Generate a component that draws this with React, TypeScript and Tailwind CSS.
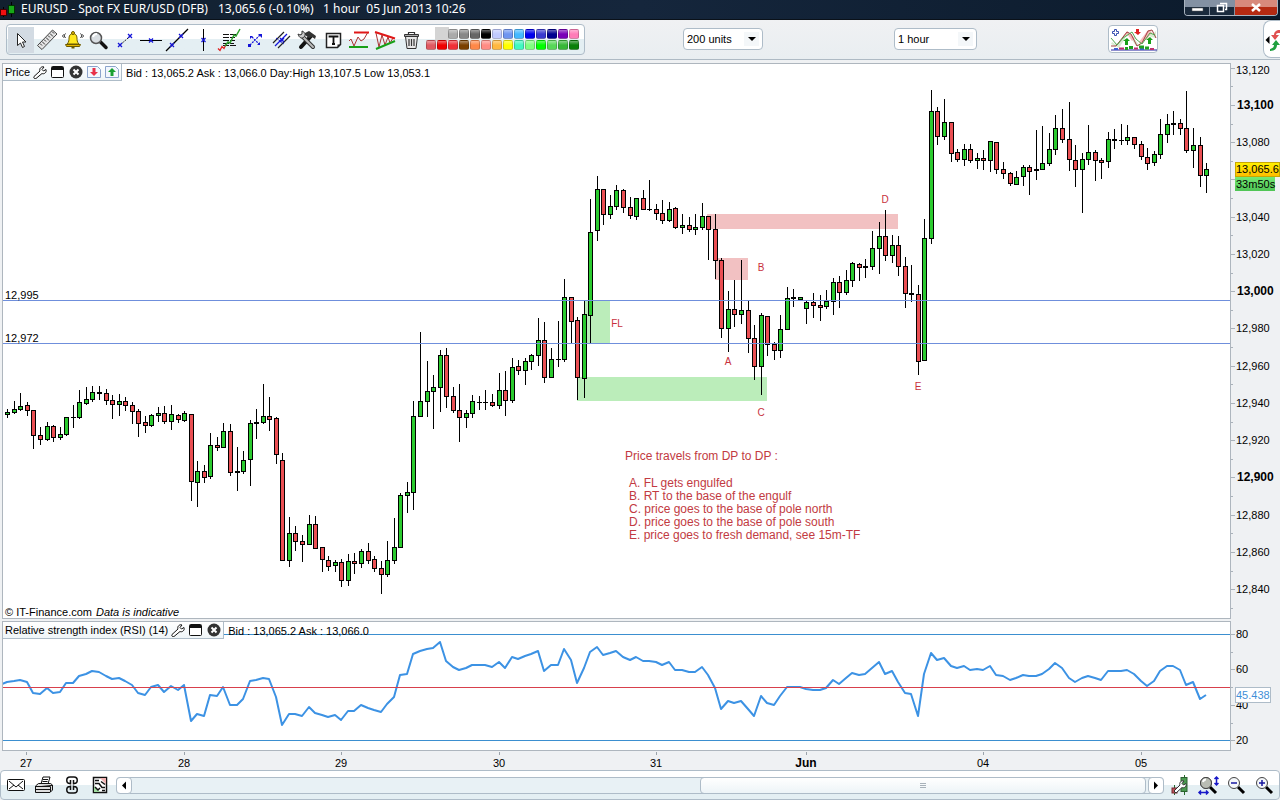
import React from 'react';

// [high, body top, body bottom, low, direction]
// direction: 1 = up, -1 = down, 0 = flat
type Candle = [number, number, number, number, number];

const CANDLES: Candle[] = [
  [409, 412, 415, 418, 1], [401, 409, 413, 414, 1], [393, 406, 410, 411, 1], [402, 405, 411, 416, -1],
  [410, 410, 436, 449, -1], [427, 435, 440, 445, -1], [422, 426, 440, 441, 1], [425, 426, 438, 442, -1],
  [427, 434, 438, 440, 1], [417, 417, 435, 436, 1], [405, 417, 418, 428, 0], [390, 402, 418, 419, 1],
  [387, 399, 404, 405, 1], [386, 392, 400, 402, 1], [386, 392, 394, 400, 0], [389, 393, 401, 405, -1],
  [395, 400, 405, 419, -1], [394, 401, 405, 416, 1], [397, 401, 406, 411, -1], [402, 405, 412, 424, -1],
  [409, 411, 424, 437, -1], [416, 422, 426, 433, -1], [414, 415, 426, 427, 1], [407, 413, 416, 422, 1],
  [406, 413, 422, 424, -1], [405, 414, 422, 430, 1], [414, 415, 420, 423, -1], [411, 413, 421, 422, 1],
  [414, 414, 482, 501, -1], [461, 471, 483, 507, 1], [465, 471, 478, 483, -1], [433, 445, 477, 479, 1],
  [437, 445, 448, 451, -1], [423, 431, 448, 448, 1], [424, 431, 473, 476, -1], [447, 471, 473, 491, 0],
  [451, 460, 472, 474, 1], [420, 423, 460, 486, 1], [409, 422, 424, 439, 0], [384, 416, 423, 424, 1],
  [397, 416, 420, 431, -1], [417, 418, 455, 464, -1], [453, 460, 561, 561, -1], [517, 533, 561, 567, 1],
  [526, 533, 542, 551, -1], [535, 541, 545, 562, -1], [515, 524, 545, 545, 1], [516, 524, 549, 549, -1],
  [547, 547, 560, 572, -1], [556, 560, 567, 571, -1], [560, 562, 566, 572, 1], [559, 562, 581, 587, -1],
  [554, 561, 581, 586, 1], [553, 561, 564, 574, -1], [549, 551, 564, 568, 1], [543, 551, 561, 564, -1],
  [556, 559, 569, 572, -1], [561, 568, 575, 594, -1], [541, 560, 575, 577, 1], [518, 547, 561, 564, 1],
  [493, 495, 548, 548, 1], [482, 492, 496, 513, 1], [401, 416, 493, 510, 1], [332, 401, 417, 417, 1],
  [361, 391, 402, 417, 1], [375, 387, 392, 429, 1], [350, 355, 388, 412, 1], [348, 355, 397, 408, -1],
  [387, 396, 411, 413, -1], [384, 410, 418, 442, -1], [410, 413, 418, 428, 1], [395, 401, 414, 418, 1],
  [396, 402, 403, 410, 0], [390, 402, 403, 410, 0], [394, 402, 406, 407, -1], [373, 390, 406, 409, 1],
  [371, 390, 401, 416, -1], [358, 367, 401, 403, 1], [360, 366, 371, 375, -1], [358, 361, 371, 385, 1],
  [354, 355, 362, 370, 1], [318, 340, 356, 366, 1], [322, 340, 378, 383, -1], [348, 359, 378, 378, 1],
  [321, 359, 360, 367, 0], [279, 297, 360, 362, 1], [297, 297, 322, 343, -1], [317, 320, 378, 400, -1],
  [301, 314, 379, 398, 1], [199, 232, 316, 343, 1], [176, 189, 231, 241, 1], [189, 189, 215, 225, -1],
  [195, 206, 215, 219, 1], [185, 190, 207, 210, 1], [189, 190, 208, 213, -1], [197, 207, 216, 219, -1],
  [198, 198, 217, 220, 1], [190, 198, 210, 210, -1], [180, 209, 210, 211, 0], [204, 209, 214, 220, -1],
  [200, 213, 221, 224, -1], [202, 209, 221, 222, 1], [207, 208, 228, 229, -1], [214, 225, 228, 234, 1],
  [217, 225, 230, 232, -1], [214, 227, 230, 235, 1], [203, 216, 228, 230, 1], [216, 216, 230, 260, -1],
  [214, 229, 261, 279, -1], [258, 260, 329, 338, -1], [291, 309, 329, 352, 1], [280, 309, 315, 327, -1],
  [260, 310, 315, 324, 1], [301, 310, 339, 353, -1], [325, 338, 367, 380, -1], [313, 315, 367, 395, 1],
  [316, 316, 345, 356, -1], [342, 344, 351, 360, -1], [315, 329, 351, 358, 1], [287, 298, 330, 330, 1],
  [289, 297, 299, 307, 0], [297, 297, 300, 300, 1], [300, 302, 309, 324, 1], [293, 302, 306, 318, -1],
  [295, 305, 308, 321, -1], [290, 301, 307, 309, 1], [278, 282, 302, 315, 1], [276, 282, 293, 308, -1],
  [270, 280, 293, 295, 1], [262, 263, 281, 287, 1], [263, 264, 268, 281, -1], [259, 266, 268, 278, 0],
  [231, 248, 267, 270, 1], [222, 236, 249, 274, 1], [210, 236, 256, 261, -1], [235, 245, 256, 263, 1],
  [236, 245, 267, 276, -1], [257, 266, 294, 308, -1], [265, 293, 295, 302, 0], [285, 294, 362, 375, -1],
  [219, 238, 361, 361, 1], [90, 111, 239, 244, 1], [107, 111, 137, 145, -1], [99, 122, 137, 140, 1],
  [122, 122, 154, 162, -1], [149, 152, 160, 162, -1], [144, 149, 160, 166, 1], [144, 149, 161, 163, -1],
  [153, 158, 161, 169, 1], [150, 158, 161, 170, -1], [141, 141, 161, 172, 1], [142, 142, 170, 174, -1],
  [162, 169, 174, 179, -1], [172, 173, 184, 186, -1], [171, 177, 185, 185, 1], [165, 167, 177, 186, 1],
  [165, 167, 172, 195, -1], [130, 169, 171, 180, 0], [126, 163, 170, 170, 1], [133, 149, 164, 166, 1],
  [115, 128, 150, 155, 1], [109, 128, 140, 143, -1], [102, 139, 160, 171, -1], [145, 160, 170, 187, -1],
  [153, 159, 170, 213, 1], [125, 152, 160, 165, 1], [150, 152, 161, 181, -1], [158, 160, 163, 179, -1],
  [132, 139, 162, 168, 1], [129, 139, 141, 149, 0], [124, 140, 141, 145, 0], [125, 137, 141, 145, 1],
  [137, 137, 145, 149, -1], [141, 144, 157, 160, -1], [148, 157, 164, 170, -1], [151, 154, 163, 166, 1],
  [119, 134, 155, 159, 1], [114, 124, 135, 143, 1], [111, 123, 125, 135, 0], [119, 123, 129, 135, -1],
  [91, 128, 151, 153, -1], [128, 145, 151, 168, 1], [137, 145, 176, 187, -1], [163, 169, 176, 193, 1],
];

const RSI = [
  682, 681, 680, 682, 693, 694, 688, 693, 692, 683, 683, 676, 674, 671, 672, 676, 679, 678, 681, 685,
  693, 695, 687, 685, 692, 686, 690, 685, 721, 714, 716, 695, 696, 687, 705, 705, 699, 681, 680, 678,
  679, 697, 725, 714, 714, 716, 707, 713, 715, 717, 715, 720, 711, 711, 705, 708, 710, 712, 704, 697,
  675, 674, 654, 651, 649, 648, 642, 661, 667, 670, 668, 665, 665, 665, 667, 662, 668, 657, 659, 656,
  654, 651, 671, 665, 665, 649, 660, 683, 668, 652, 647, 655, 653, 651, 657, 660, 657, 661, 661, 662,
  665, 662, 670, 670, 672, 672, 667, 675, 688, 709, 701, 703, 701, 709, 716, 696, 703, 705, 696, 687,
  687, 687, 689, 690, 690, 688, 680, 684, 678, 673, 675, 674, 668, 662, 674, 671, 682, 693, 694, 716,
  674, 653, 660, 658, 666, 668, 666, 670, 669, 670, 666, 675, 676, 680, 678, 675, 676, 676, 674, 669,
  663, 668, 678, 682, 678, 676, 678, 680, 671, 671, 671, 670, 674, 681, 686, 681, 671, 666, 666, 670,
  685, 682, 699, 695,
];

const barX = (i: number) => Math.floor(7.75 + 6.551 * i);
const priceY = (p: number) => Math.round(105 + (13100 - p) * 1.862);

const PRICE_TICKS = Array.from({ length: 30 }, (_, i) => 13120 - i * 10);

const DAYS = [
  { x: 26, label: '27' },
  { x: 184, label: '28' },
  { x: 341, label: '29' },
  { x: 499, label: '30' },
  { x: 656, label: '31' },
  { x: 806, label: 'Jun', bold: true },
  { x: 983, label: '04' },
  { x: 1141, label: '05' },
];

const LETTERS = [
  { x: 617, y: 327, t: 'FL' },
  { x: 728, y: 365, t: 'A' },
  { x: 761, y: 271, t: 'B' },
  { x: 761, y: 416, t: 'C' },
  { x: 885, y: 203, t: 'D' },
  { x: 918, y: 390, t: 'E' },
];

const NOTES = [
  'A. FL gets engulfed',
  'B. RT to the base of the engulf',
  'C. price goes to the base of pole north',
  'D. price goes to the base of pole south',
  'E. price goes to fresh demand, see 15m-TF',
];

const SWATCHES = [
  ['#ffffff', '#d4d4d4', '#aaaaaa', '#888888', '#666666', '#000000', '#c0caff', '#6f95f0', '#45b8ff', '#0000ee', '#3a3ad0', '#000090', '#7a00b8', '#ff7cb8'],
  ['#e05a62', '#f00000', '#f03038', '#7a4000', '#ff8848', '#ff8c84', '#ffb840', '#ffff00', '#40f8c0', '#80ff80', '#00ff00', '#58d858', '#38b838', '#0a800a'],
];

const Mark: React.FC<{ x: number; y: number }> = ({ x, y }) => (
  <path d={`M${x - 2} ${y - 2}l4 4M${x + 2} ${y - 2}l-4 4`} stroke="#1414d8" strokeWidth="1.300" />
);

const TOOLS: { name: string; icon: React.ReactNode }[] = [
  {
    name: 'Pointer',
    icon: <path d="M9.500 6.500v12l3-2.500 2 4.500 2-1-2-4.500h3.500z" fill="#fff" stroke="#222" />,
  },
  {
    name: 'Ruler',
    icon: (
      <g>
        <path d="M3.500 18.500l15-15.500 4.500 4-15 15.500z" fill="#e4e4e4" stroke="#444" />
        <path d="M6 16.500l2 2M8 14.500l3 3M10 12.500l2 2M12 10.500l3 3M14 8.500l2 2M16 6.500l3 3M18 4.500l2 2" stroke="#333" />
      </g>
    ),
  },
  {
    name: 'Alert',
    icon: (
      <g>
        <path d="M7 17c2-2 2-4 2-6 0-3 2-4.500 4-4.500s4 1.500 4 4.500c0 2 0 4 2 6z" fill="#ffe820" stroke="#6b5a00" />
        <path d="M5.500 17.500h15l-1 2h-13z" fill="#e8b800" stroke="#6b5a00" />
        <circle cx="13" cy="6" r="1.500" fill="#e8b800" stroke="#6b5a00" />
        <path d="M11.500 20.500h3" stroke="#6b5a00" strokeWidth="2" />
        <path d="M5.500 6.500c-1.500 1.500-1.500 3 0 4.500M3.500 7.500c-1 1-1 2 0 3M20.500 6.500c1.500 1.500 1.500 3 0 4.500M22.500 7.500c1 1 1 2 0 3" fill="none" stroke="#222" />
      </g>
    ),
  },
  {
    name: 'Zoom',
    icon: (
      <g>
        <path d="M14.500 15l5.500 5.500" stroke="#111" strokeWidth="3.500" strokeLinecap="round" />
        <circle cx="10" cy="11" r="5.500" fill="#d9dee2" stroke="#555" strokeWidth="1.500" />
        <path d="M7 10a4 4 0 0 1 4-3" fill="none" stroke="#fff" strokeWidth="2" />
      </g>
    ),
  },
  {
    name: 'Segment',
    icon: (
      <g>
        <path d="M8 18l11-9.500" stroke="#222" strokeDasharray="2 1" />
        <Mark x={8} y={18} />
        <Mark x={18} y={9} />
      </g>
    ),
  },
  {
    name: 'Horizontal line',
    icon: (
      <g>
        <path d="M2 13.500h22" stroke="#000" />
        <Mark x={13} y={13.5} />
      </g>
    ),
  },
  {
    name: 'Line',
    icon: (
      <g>
        <path d="M2 24L24 2" stroke="#000" strokeWidth="1.200" />
        <Mark x={8} y={18} />
        <Mark x={17} y={9} />
      </g>
    ),
  },
  {
    name: 'Vertical line',
    icon: (
      <g>
        <path d="M13.500 2v22" stroke="#000" />
        <Mark x={13.5} y={13} />
      </g>
    ),
  },
  {
    name: 'Retracement',
    icon: (
      <g>
        <path d="M7 7.500h14M7 10.500h12M7 13.500h12M7 16.500h11M7 18.500h13" stroke="#111" strokeWidth="1.200" strokeDasharray="6 1" />
        <path d="M2 21.500l2 2 2-4 2 2 2-4" fill="none" stroke="#e02020" strokeWidth="1.300" />
        <path d="M9 19l3-4 2 1 4-8 2 1 4-7" fill="none" stroke="#2ca02c" strokeWidth="1.500" />
      </g>
    ),
  },
  {
    name: 'Extension',
    icon: (
      <g>
        <path d="M8 18l10-10M10 10l7 7" stroke="#1414d8" strokeWidth="1.200" strokeDasharray="2 1" />
        <path d="M16 7h4v4zM11 9H8v3zM18 15v3h-3z" fill="#1414d8" />
        <path d="M6 17h3v3H6z" fill="#1414d8" />
      </g>
    ),
  },
  {
    name: 'Parallel lines',
    icon: (
      <g>
        <path d="M5 16L16 5M10 21L22 9" stroke="#222" strokeWidth="1.200" />
        <path d="M7 19L19 7" stroke="#1414d8" strokeWidth="1.200" />
        <path d="M8 11l8 6" stroke="#1414d8" strokeDasharray="2 1" />
        <Mark x={14} y={13} />
      </g>
    ),
  },
  {
    name: 'Settings',
    icon: (
      <g>
        <path d="M7 20L17 9" stroke="#111" strokeWidth="4" strokeLinecap="round" />
        <path d="M11 6l4-2 7 5-1 3-3-2-3 1-4-3z" fill="#333" />
        <path d="M8 9l11 11" stroke="#333" strokeWidth="4" strokeLinecap="round" />
        <path d="M8 9l11 11" stroke="#bbb" strokeWidth="2" strokeLinecap="round" />
        <path d="M4 7c1 4 4 5 6 3s1-5-2-6l0 3-2 1z" fill="#ccc" stroke="#333" />
      </g>
    ),
  },
  {
    name: 'Text',
    icon: (
      <g>
        <path d="M6.500 6.500h14v11l-3 3h-11z" fill="#fff" stroke="#222" strokeWidth="1.500" />
        <path d="M9.500 10.500v-1h8v1M13.500 9v8M12 17h3" fill="none" stroke="#111" strokeWidth="1.800" />
        <path d="M20.500 17.500h-3v3z" fill="#222" />
      </g>
    ),
  },
  {
    name: 'Range pattern',
    icon: (
      <g>
        <path d="M3 14l2-2 3 7 4-9 3 4 3-2 4-7" fill="none" stroke="#a33" />
        <path d="M8 5.500h15" stroke="#e01818" strokeWidth="2" />
        <path d="M3 20h19" stroke="#18a018" strokeWidth="2" />
      </g>
    ),
  },
  {
    name: 'Triangle pattern',
    icon: (
      <g>
        <path d="M4 6l3 14 3-12 3 10 3-8 2 6 3-5" fill="none" stroke="#a33" />
        <path d="M3 5l20 6.500" stroke="#e01818" strokeWidth="2" />
        <path d="M4 22l19-8" stroke="#18a018" strokeWidth="2" />
      </g>
    ),
  },
  {
    name: 'Delete',
    icon: (
      <g>
        <path d="M7.500 9.500h12l-1.500 12h-9z" fill="#e8e8e8" stroke="#333" />
        <path d="M6.500 7.500h14v2h-14z" fill="#aaa" stroke="#333" />
        <path d="M10.500 7V5.500h6V7M11 12v7M13.500 12v7M16 12v7" fill="none" stroke="#333" strokeWidth="1.200" />
      </g>
    ),
  },
];

const Dropdown: React.FC<{ label: string; options: string[]; className: string }> = ({ label, options, className }) => (
  <div className={`relative h-[22px] rounded border border-[#aebcc8] bg-white ${className}`}>
    <select aria-label={label} className="block h-full w-full appearance-none bg-transparent pl-[3px] text-[11px] leading-5 outline-none">
      {options.map((o) => (
        <option key={o}>{o}</option>
      ))}
    </select>
    <svg className="pointer-events-none absolute right-[3px] top-[3px] bg-[#f4f7f9]" width="15" height="14">
      <path d="M4 5h8l-4 4z" fill="#000" />
    </svg>
  </div>
);

const TitleBar: React.FC = () => (
  <header className="flex h-5 shrink-0 items-start border-b border-[#0a1119] bg-gradient-to-r from-[#12202f] via-[#15263c] to-[#0b1a2b] text-white">
    <svg width="18" height="18" className="mt-px shrink-0">
      <path d="M3.500 6v10M11.500 1v15" stroke="#000" />
      <rect x="0.500" y="8.500" width="6" height="6" fill="#f01010" stroke="#400" />
      <rect x="8.500" y="4.500" width="6" height="8" fill="#18a818" stroke="#030" />
    </svg>
    <h1 className="flex whitespace-pre pl-[3px] font-['Noto_Sans','Open_Sans',sans-serif] text-[12px] leading-[18px]">
      <span className="w-[197px]">EURUSD - Spot FX EUR/USD (DFB)</span>
      <span className="w-[105px]">13,065.6 (-0.10%)</span>
      <span>1 hour  05 Jun 2013 10:26</span>
    </h1>
    <div className="ml-auto mr-[2px] flex h-4 overflow-hidden rounded-b border border-t-0 border-[#a9b4c0]">
      <button type="button" aria-label="Minimize" className="w-[25px] border-r border-[#8490a0] bg-gradient-to-b from-[#8391a3] from-50% to-[#1a2a3c] to-50%">
        <svg width="24" height="15"><path d="M7 8h11v3H7z" fill="#fff" stroke="#555" strokeWidth="0.500" /></svg>
      </button>
      <button type="button" aria-label="Restore" className="w-[25px] border-r border-[#8490a0] bg-gradient-to-b from-[#8391a3] from-50% to-[#1a2a3c] to-50%">
        <svg width="24" height="15"><path d="M10 3.500h6.500v6H15M7.500 5.500h6v6h-6z" fill="none" stroke="#fff" strokeWidth="1.500" /></svg>
      </button>
      <button type="button" aria-label="Close" className="w-[42px] bg-gradient-to-b from-[#d88a7c] from-50% to-[#b52a12] to-50%">
        <svg width="42" height="15"><path d="M17 4l8 7M25 4l-8 7" stroke="#fff" strokeWidth="2.500" /></svg>
      </button>
    </div>
  </header>
);

const Toolbar: React.FC = () => (
  <div className="flex h-10 shrink-0 items-start border-b border-[#aebac4] bg-gradient-to-b from-[#f0f1f3] to-[#e9eef1] pl-[6px]">
    <div className="mt-1 flex h-[31px] items-center rounded border border-[#aebcc8] bg-gradient-to-b from-white from-50% to-[#e4eff3] to-50% px-px">
      {TOOLS.map((t, i) => (
        <button key={t.name} type="button" aria-label={t.name} title={t.name} className={i === 0 ? 'h-[26px] w-[26px] bg-[#d3dbe3]' : 'h-[26px] w-[26px]'}>
          <svg width="26" height="26">{t.icon}</svg>
        </button>
      ))}
      <div className="ml-[2px] mr-1 grid grid-cols-14 gap-px">
        {SWATCHES.flat().map((c, i) => (
          <button
            key={i}
            type="button"
            aria-label={`Color ${c}`}
            className={
              i === 0
                ? 'h-[10px] w-[10px]'
                : i === 1
                  ? 'h-[10px] w-[10px] outline-2 outline-[#d4d4d4]'
                  : 'h-[10px] w-[10px] rounded-[2px] border border-black/20 bg-gradient-to-b from-white/40 to-transparent to-50%'
            }
            style={{ backgroundColor: c }}
          />
        ))}
      </div>
    </div>
    <Dropdown label="Units" options={['200 units', '500 units', '1000 units']} className="ml-[98px] mt-2 w-20" />
    <Dropdown label="Timeframe" options={['1 hour', '4 hours', '1 day']} className="ml-[131px] mt-2 w-[83px]" />
    <button type="button" aria-label="Add indicator" className="ml-[131px] mt-[5px] h-7 w-[50px] rounded border border-[#aebcc8] bg-white">
      <svg width="48" height="26">
        <path d="M3 16l5 3L18 6l7 6 5 7L40 5l4 3 3-3v7l-5-1-3-3-9 12h-3l-7-11-3 2-7 11-8-4z" fill="#d9ecd2" />
        <path d="M12 13l6-8 8 7-3 3-5-7zM30 16l9-12 4 2-4 6-8 6z" fill="#f7b9b9" />
        <path d="M2 20l5 0L18 6l4 2 6 12 5-3 6-12 4-1 4 8" fill="none" stroke="#a04040" />
        <path d="M2 12l6 7 6-7 9-6 4 7 6 5 8-11 5 2" fill="none" stroke="#50a850" />
        <path d="M3.500 5.500h2v-2h2v2h2v2h-2v2h-2v-2h-2z" fill="#fff" stroke="#3850b0" />
        <path d="M18 12l3 3h-2v4h-3v-4h-2zM41 11l3 3h-2v4h-3v-4h-2z" fill="#18a018" />
        <path d="M29 9l3-3h-2V3h-3v3h-2z" fill="#e02020" />
        <path d="M2 24h46" stroke="#2020a0" />
        <path d="M5 23h4M31 23h4" stroke="#4060d0" strokeWidth="2" />
        <path d="M10 22.500h5M25 22.500h4M41 23h4" stroke="#c03070" strokeWidth="2" />
        <path d="M16 22.500h3M20 21.500h4M30 21h5M36 22h4" stroke="#20a020" strokeWidth="3" />
      </svg>
    </button>
    <button type="button" aria-label="Show orders" className="ml-auto h-[38px] w-[17px] overflow-hidden rounded-l-lg border border-r-0 border-[#aebcc8] bg-white">
      <svg width="16" height="36">
        <path d="M1.500 19l4-4v8z" fill="#000" />
        <path d="M16 9c-4 0-6 2-6 5H7l4 5 4-5h-3c0-2 2-2 4-2z" fill="#e05050" />
        <path d="M6 30c5 0 7-3 7-6h3l-4-5-4 5h2c0 2-1 3-4 4z" fill="#20a040" />
      </svg>
    </button>
  </div>
);

const WrenchIcon = () => (
  <svg width="16" height="14"><path d="M2 11.500l6-5.500c-1-2 1-5 4-4l-2 2.500 1.500 1.500L14 4.500c1 3-2 5-4 4L4 13.500c-1 1-3-1-2-2z" fill="#fff" stroke="#111" /></svg>
);
const WindowIcon = () => (
  <svg width="14" height="14">
    <rect x="0.500" y="1.500" width="12" height="11" rx="1" fill="#fff" stroke="#111" />
    <path d="M1 2h11v3H1z" fill="#111" />
  </svg>
);
const CloseIcon = () => (
  <svg width="14" height="14">
    <circle cx="7" cy="7" r="6.500" fill="#333" />
    <path d="M4.500 4.500l5 5M9.500 4.500l-5 5" stroke="#fff" strokeWidth="2" />
  </svg>
);
const SheetIcon: React.FC<{ up?: boolean }> = ({ up }) => (
  <svg width="14" height="14">
    <path d="M0.500 1.500h10l3 3v8h-13z" fill="#f3f7fd" stroke="#8ca4cc" />
    {up ? <path d="M7 3l4 4H8.500v4h-3V7H3z" fill="#18a030" /> : <path d="M7 11L3 7h2.500V3h3v4H11z" fill="#e83048" />}
  </svg>
);

const PanelHeader: React.FC<{ title: string; quote: string; extra?: boolean }> = ({ title, quote, extra }) => (
  <div className="absolute left-0 top-0 flex whitespace-nowrap text-[11px] leading-4">
    <div className="flex h-[17px] items-center border-b border-r border-[#aebcc8] bg-gradient-to-b from-white to-[#eff5f8] pl-[2px]">
      <h2>{title}</h2>
      <div className="ml-px flex">
        <button type="button" aria-label="Properties" className="w-[18px] pl-px"><WrenchIcon /></button>
        <button type="button" aria-label="Maximize" className="flex w-[18px] justify-center"><WindowIcon /></button>
        <button type="button" aria-label="Close panel" className="flex w-[18px] justify-center"><CloseIcon /></button>
        {extra && (
          <>
            <button type="button" aria-label="Sell" className="flex w-[18px] justify-center"><SheetIcon /></button>
            <button type="button" aria-label="Buy" className="flex w-[18px] justify-center"><SheetIcon up /></button>
          </>
        )}
      </div>
    </div>
    <p className="pl-1 leading-[18px]">{quote}</p>
  </div>
);

const PriceChart: React.FC = () => (
  <section className="relative min-w-0 overflow-hidden border border-[#aeb6be] bg-white">
    <svg className="block h-full w-full" role="img" aria-label="EURUSD candlestick chart">
      <g transform="translate(-3 -64)">
        <g shapeRendering="crispEdges">
          <rect x="584" y="301" width="26" height="42" fill="#bbedba" />
          <rect x="577" y="377" width="190" height="24" fill="#bbedba" />
          <rect x="707" y="214" width="191" height="15" fill="#f2c1c2" />
          <rect x="715" y="258" width="33" height="22" fill="#f2c1c2" />
          {CANDLES.map(([h, t, b, l, dir], i) => {
            const x = barX(i);
            return (
              <g key={i}>
                <rect x={x} y={h} width="1" height={l - h} fill="#000" />
                <rect x={x - 2} y={t} width="5" height={b - t} fill="#000" />
                {dir !== 0 && <rect x={x - 1} y={t + 1} width="3" height={b - t - 2} fill={dir > 0 ? '#2bcb2f' : '#ea4f53'} />}
              </g>
            );
          })}
          <rect x="3" y="300" width="100%" height="1" fill="#6f8fdc" />
          <rect x="3" y="343" width="100%" height="1" fill="#6f8fdc" />
        </g>
        <g fontSize="11">
          <text x="5" y="299">12,995</text>
          <text x="5" y="342">12,972</text>
        </g>
        <g fontSize="10" fill="#c8313d" textAnchor="middle">
          {LETTERS.map((l) => (
            <text key={l.t} x={l.x} y={l.y}>{l.t}</text>
          ))}
        </g>
        <g fontSize="12" fill="#c23a42">
          <text x="625" y="460">Price travels from DP to DP :</text>
          {NOTES.map((n, i) => (
            <text key={n} x="629" y={487 + i * 13}>{n}</text>
          ))}
        </g>
      </g>
    </svg>
    <PanelHeader title="Price" quote="Bid : 13,065.2 Ask : 13,066.0 Day:High 13,107.5 Low 13,053.1" extra />
    <p className="absolute bottom-0 left-[2px] flex gap-1 text-[11px] leading-3">
      <span>© IT-Finance.com</span>
      <em>Data is indicative</em>
    </p>
  </section>
);

const PriceAxis: React.FC = () => (
  <div className="relative">
    <svg className="block h-full w-full" aria-label="Price axis">
      <g transform="translate(-1231 -63)">
        {PRICE_TICKS.map((p) => {
          const y = priceY(p);
          const major = p % 20 === 0;
          const bold = p % 100 === 0;
          return (
            <g key={p}>
              <rect x="1231" y={y} width={major ? 4 : 2} height="1" fill="#aab2ba" />
              {major && p !== 13060 && (
                <text x={bold ? 1237 : 1236} y={p === 13120 ? 74 : y + 4} fontSize={bold ? 12 : 11} fontWeight={bold ? 700 : 400}>
                  {p.toLocaleString('en-US')}
                </text>
              )}
            </g>
          );
        })}
      </g>
    </svg>
    <div className="absolute left-1 right-0 top-[99px] text-[11px] leading-[14px]">
      <p className="border border-[#c9a800] bg-gradient-to-b from-[#fff000] to-[#ffbe00] leading-[13px]">13,065.6</p>
      <p className="w-10 bg-gradient-to-b from-[#74ea74] to-[#4fc455] pl-px">33m50s</p>
    </div>
  </div>
);

const RsiChart: React.FC = () => (
  <section className="relative min-w-0 overflow-hidden border border-[#aeb6be] bg-white">
    <svg className="block h-full w-full" role="img" aria-label="RSI chart">
      <g transform="translate(-3 -622)">
        <rect x="3" y="634" width="100%" height="1" fill="#3b8fd0" />
        <rect x="3" y="740" width="100%" height="1" fill="#3b8fd0" />
        <polyline
          points={`2,684 ${RSI.map((y, i) => `${barX(i)},${y}`).join(' ')}`}
          fill="none"
          stroke="#3c92e4"
          strokeWidth="2"
          strokeLinejoin="round"
        />
        <rect x="3" y="687" width="100%" height="1" fill="#d8404c" />
      </g>
    </svg>
    <PanelHeader title="Relative strength index (RSI) (14)" quote="Bid : 13,065.2 Ask : 13,066.0" />
  </section>
);

const RsiAxis: React.FC = () => (
  <div className="relative">
    <svg className="block h-full w-full" fontSize="11" aria-label="RSI axis">
      <g transform="translate(-1231 -621)">
        {[80, 70, 60, 50, 40, 30, 20].map((v) => {
          const y = Math.round(634 + (80 - v) * 1.77);
          return (
            <g key={v}>
              <rect x="1231" y={y} width={v % 20 === 0 ? 4 : 2} height="1" fill="#aab2ba" />
              {v % 20 === 0 && <text x="1236" y={y + 4}>{v}</text>}
            </g>
          );
        })}
      </g>
    </svg>
    <p className="absolute left-1 top-[66px] border border-[#aebcc8] bg-white text-[11px] leading-[14px] text-[#3f8fd8]">45.438</p>
  </div>
);

const TimeAxis: React.FC = () => (
  <svg className="block h-[19px] w-full shrink-0" fontSize="11" aria-label="Time axis">
    {DAYS.map((d) => (
      <g key={d.label}>
        <rect x={d.x} y="1" width="1" height="3" fill="#9aa2aa" />
        <text x={d.x} y="16" textAnchor="middle" fontWeight={d.bold ? 700 : 400} fontSize={d.bold ? 12 : 11}>{d.label}</text>
      </g>
    ))}
  </svg>
);

const Lens: React.FC<{ children?: React.ReactNode }> = ({ children }) => (
  <svg width="22" height="22">
    <path d="M13 13l6 6" stroke="#000" strokeWidth="3" />
    <circle cx="9" cy="9" r="5.500" fill="#f4f7fa" stroke="#444" />
    {children}
  </svg>
);

const BottomBar: React.FC = () => (
  <footer className="flex h-[30px] shrink-0 items-center rounded border border-[#aebcc8] bg-gradient-to-b from-white from-50% to-[#e4eff3] to-50% pl-px">
    <button type="button" aria-label="Mail" className="flex w-7 justify-center">
      <svg width="20" height="20">
        <rect x="1.500" y="4.500" width="17" height="11" rx="1" fill="#fff" stroke="#111" />
        <path d="M3 6l7 6 7-6M3 14l5-4M17 14l-5-4" fill="none" stroke="#111" />
      </svg>
    </button>
    <button type="button" aria-label="Print" className="flex w-7 justify-center">
      <svg width="20" height="20">
        <path d="M7 9l2-7h7l-2 7z" fill="#fff" stroke="#111" />
        <path d="M9 4.500h5M8.500 6.500h5" stroke="#111" />
        <path d="M1.500 11l3-2.500h12l2 1.500v5l-2.500 2.500h-14.500z" fill="#ddd" stroke="#111" />
        <path d="M2 11.500h14l2-1.500M2 14.500h14M16.500 12v5" stroke="#111" />
      </svg>
    </button>
    <button type="button" aria-label="Link charts" className="flex w-7 justify-center">
      <svg width="20" height="20" fill="none" stroke="#111" strokeWidth="1.500">
        <path d="M8.500 8.500H8a3 3 0 0 1 0-6.500h4a3 3 0 0 1 0 6.500h-.500M8.500 5v4.500M11.500 5v4.500" />
        <path d="M8.500 11.500H8a3 3 0 0 0 0 6.500h4a3 3 0 0 0 0-6.500h-.500M8.500 15v-4.500M11.500 15v-4.500" />
      </svg>
    </button>
    <button type="button" aria-label="Report" className="flex w-7 justify-center">
      <svg width="18" height="20">
        <rect x="2.500" y="2.500" width="13" height="15" fill="#fff" stroke="#111" strokeWidth="1.500" />
        <path d="M9 3h6v6z" fill="#f0b0b0" />
        <path d="M3 11l6 6H3z" fill="#a0dca0" />
        <path d="M4 5.500h4M4 8.500h4l3 4h3M10 6.500l4 3M4 12l3 3 2-2M11 15.500h3" fill="none" stroke="#111" strokeWidth="1.500" />
      </svg>
    </button>
    <div className="ml-[2px] flex h-[17px] flex-1 rounded border border-[#aebcc8] bg-[#e8f1f5]">
      <button type="button" aria-label="Scroll left" className="-my-px -ml-px h-[17px] w-4 rounded border border-[#aebcc8] bg-white">
        <svg width="14" height="15"><path d="M9 3.500v8l-4-4z" fill="#000" /></svg>
      </button>
      <div className="flex flex-1 justify-end" role="scrollbar" aria-controls="charts" aria-valuenow={100} aria-orientation="horizontal">
        <div className="-my-px flex w-[44%] flex-col items-center justify-center gap-px rounded border border-[#aebcc8] bg-gradient-to-b from-white to-[#edf4f7]">
          <i className="h-px w-[6px] bg-[#a8b2ba]" />
          <i className="h-px w-[6px] bg-[#a8b2ba]" />
          <i className="h-px w-[6px] bg-[#a8b2ba]" />
        </div>
      </div>
      <button type="button" aria-label="Scroll right" className="-my-px -mr-px ml-[2px] h-[17px] w-4 rounded border border-[#aebcc8] bg-white">
        <svg width="14" height="15"><path d="M5 3.500v8l4-4z" fill="#000" /></svg>
      </button>
    </div>
    <button type="button" aria-label="Chart settings" className="ml-[2px] flex w-7 justify-center">
      <svg width="20" height="20">
        <path d="M14.500 0v20M4.500 10v10" stroke="#276a2c" />
        <rect x="11" y="2.500" width="6" height="14" fill="#4a9a50" stroke="#2c6030" />
        <rect x="2" y="13" width="5" height="5" fill="#c05058" stroke="#702830" />
        <path d="M4 16l6-6c-1-2 1-5 4-4l-2 2.500 1.500 1.500L16 8.500c1 3-2 5-4 4l-6 5.500z" fill="#fff" stroke="#333" />
      </svg>
    </button>
    <button type="button" aria-label="Fit" className="flex w-7 justify-center">
      <Lens>
        <circle cx="9" cy="9" r="5.500" fill="#b9bdb4" stroke="#444" />
        <path d="M6 8a3 3 0 0 1 3-2.500" fill="none" stroke="#fff" strokeWidth="2" />
        <path d="M19.500 3v8M17.500 5l2-2 2 2M17.500 9l2 2 2-2M2 18.500h9M4 16.500l-2 2 2 2M9 16.500l2 2-2 2" fill="none" stroke="#1818c8" strokeWidth="1.500" />
      </Lens>
    </button>
    <button type="button" aria-label="Zoom out" className="flex w-7 justify-center">
      <Lens><path d="M6 9h6" stroke="#1818a0" strokeWidth="1.500" /></Lens>
    </button>
    <button type="button" aria-label="Zoom in" className="mr-px flex w-7 justify-center">
      <Lens><path d="M6 9h6M9 6v6" stroke="#1818a0" strokeWidth="1.500" /></Lens>
    </button>
  </footer>
);

const App: React.FC = () => {
  return (
    <div className="flex h-screen flex-col overflow-hidden bg-[#eff1f3] font-['Liberation_Sans',Arial,sans-serif] text-black">
      <TitleBar />
      <Toolbar />
      <main id="charts" className="flex min-h-0 flex-1 flex-col pt-[3px]">
        <div className="grid min-h-0 flex-1 grid-cols-[1fr_49px] grid-rows-[minmax(0,1fr)] pl-[2px]">
          <PriceChart />
          <PriceAxis />
        </div>
        <div className="mt-[2px] grid h-[130px] shrink-0 grid-cols-[1fr_49px] grid-rows-[minmax(0,1fr)] pl-[2px]">
          <RsiChart />
          <RsiAxis />
        </div>
        <TimeAxis />
      </main>
      <BottomBar />
    </div>
  );
};

export default App;
